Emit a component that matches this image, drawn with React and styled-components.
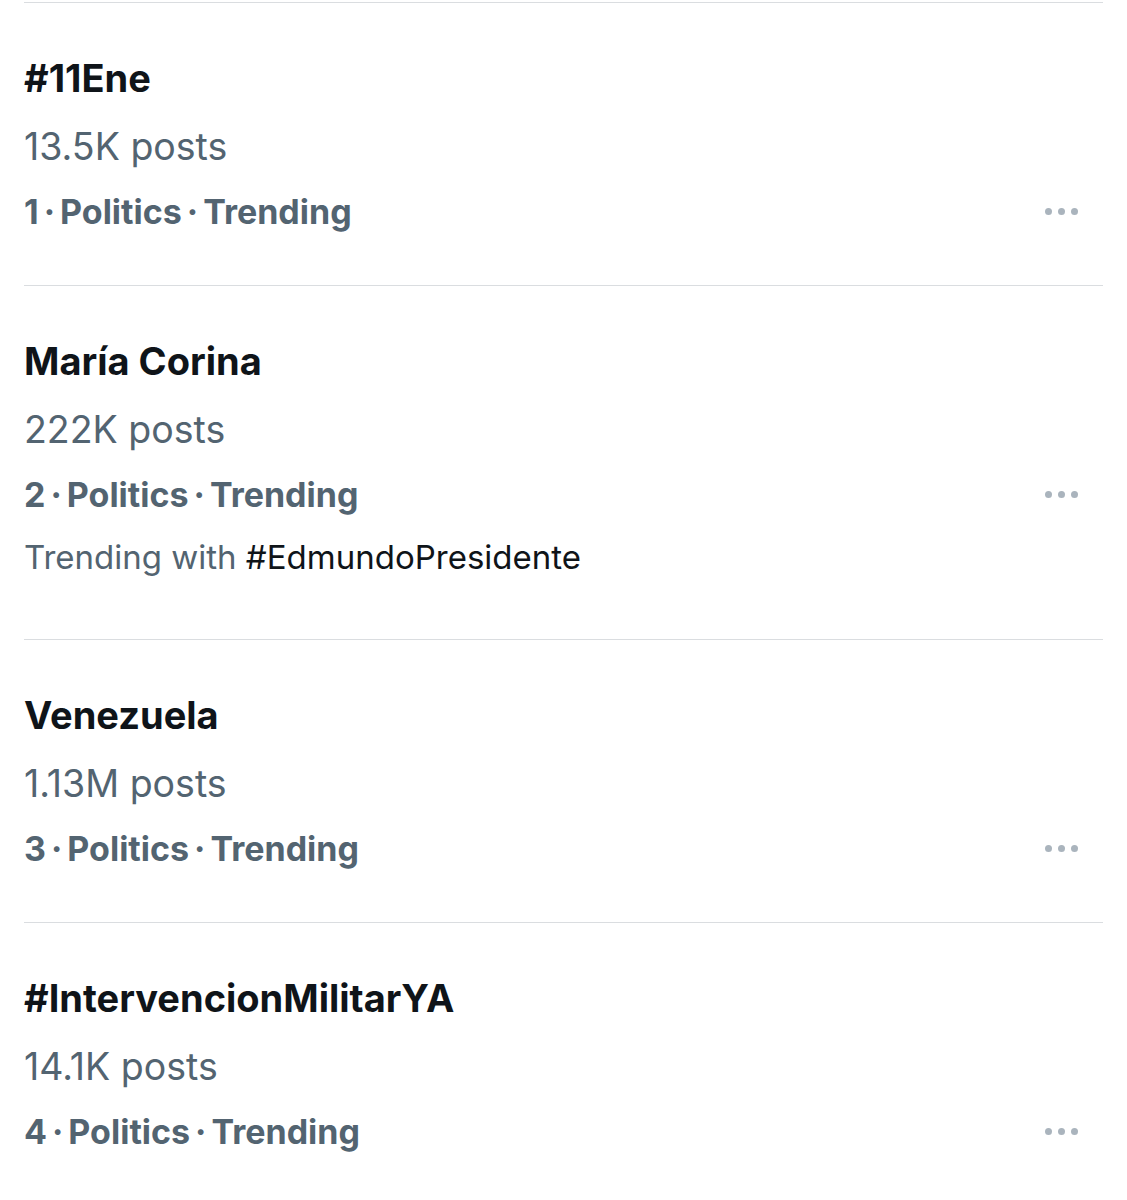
import React from "react";
import styled, { createGlobalStyle } from "styled-components";

const Global = createGlobalStyle`
  html, body { margin: 0; padding: 0; background: #ffffff; }
  body { font-family: Inter, "Noto Sans", "Liberation Sans", sans-serif; -webkit-font-smoothing: antialiased; }
`;

const Page = styled.div`
  width: 1127px;
  padding-top: 2px;
  background: #ffffff;
`;

const List = styled.div`
  display: flex;
  flex-direction: column;
  margin: 0 24px;
`;

const Item = styled.div`
  display: flex;
  flex-direction: column;
  border-top: 1.5px solid #dadde0;
  padding: 43px 0 ${(p) => p.$bottom}px;
`;

const Title = styled.div`
  font-size: 38px;
  font-weight: 700;
  color: #0f1419;
  line-height: 64px;
`;

const Posts = styled.div`
  font-size: 37.5px;
  font-weight: 400;
  color: #536471;
  line-height: 74px;
`;

const MetaRow = styled.div`
  display: flex;
  align-items: center;
  justify-content: space-between;
  height: 54px;
  margin-bottom: 2px;
  padding-right: 25px;
`;

const Meta = styled.span`
  font-size: 34px;
  font-weight: 700;
  color: #536471;
`;

const Dot = styled.span`
  margin: 0 5px;
  font-weight: 700;
`;

const More = styled.div`
  display: flex;
  gap: 6px;
`;

const MoreDot = styled.span`
  width: 7px;
  height: 7px;
  border-radius: 50%;
  background: #aab4bd;
`;

const With = styled.div`
  font-size: 33px;
  font-weight: 400;
  color: #536471;
  line-height: 62px;
  margin-top: 3px;
`;

const Tag = styled.span`
  color: #0f1419;
`;

const trends = [
  { rank: 1, name: "#11Ene", posts: "13.5K posts" },
  { rank: 2, name: "María Corina", posts: "222K posts", with: "#EdmundoPresidente" },
  { rank: 3, name: "Venezuela", posts: "1.13M posts" },
  { rank: 4, name: "#IntervencionMilitarYA", posts: "14.1K posts" },
];

export default function App() {
  return (
    <Page>
      <Global />
      <List>
        {trends.map((t) => (
          <Item key={t.rank} $bottom={t.with ? 51 : 45}>
            <Title>{t.name}</Title>
            <Posts>{t.posts}</Posts>
            <MetaRow>
              <Meta>
                {t.rank}
                <Dot>·</Dot>Politics<Dot>·</Dot>Trending
              </Meta>
              <More>
                <MoreDot />
                <MoreDot />
                <MoreDot />
              </More>
            </MetaRow>
            {t.with && (
              <With>
                Trending with <Tag>{t.with}</Tag>
              </With>
            )}
          </Item>
        ))}
      </List>
    </Page>
  );
}
